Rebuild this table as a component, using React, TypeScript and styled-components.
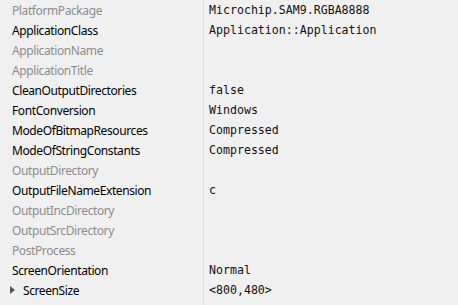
import * as React from 'react';
import styled, { createGlobalStyle } from 'styled-components';

interface Property {
  name: string;
  value?: string;
  set: boolean;
  expandable?: boolean;
}

const properties: Property[] = [
  { name: 'PlatformPackage', value: 'Microchip.SAM9.RGBA8888', set: false },
  { name: 'ApplicationClass', value: 'Application::Application', set: true },
  { name: 'ApplicationName', set: false },
  { name: 'ApplicationTitle', set: false },
  { name: 'CleanOutputDirectories', value: 'false', set: true },
  { name: 'FontConversion', value: 'Windows', set: true },
  { name: 'ModeOfBitmapResources', value: 'Compressed', set: true },
  { name: 'ModeOfStringConstants', value: 'Compressed', set: true },
  { name: 'OutputDirectory', set: false },
  { name: 'OutputFileNameExtension', value: 'c', set: true },
  { name: 'OutputIncDirectory', set: false },
  { name: 'OutputSrcDirectory', set: false },
  { name: 'PostProcess', set: false },
  { name: 'ScreenOrientation', value: 'Normal', set: true },
  { name: 'ScreenSize', value: '<800,480>', set: true, expandable: true },
];

const GlobalStyle = createGlobalStyle`
  html, body {
    margin: 0;
    background: #f0f0f0;
  }
`;

// two-column property grid with a thin splitter line between names and values
const Grid = styled.div`
  display: grid;
  grid-template-columns: 203px 1fr;
  height: 305px;
  align-content: start;
  background: linear-gradient(#d9d9d9, #d9d9d9) 203px 0 / 1px 100% no-repeat, #f0f0f0;
`;

const NameCell = styled.div<{ $set: boolean; $indent: number }>`
  display: flex;
  align-items: center;
  height: 20px;
  padding-left: ${(p) => p.$indent}px;
  font-family: 'Noto Sans', 'Open Sans', sans-serif;
  font-size: 12px;
  letter-spacing: -0.4px;
  color: ${(p) => (p.$set ? '#000' : '#8c8c8c')};
  white-space: nowrap;
  position: relative;
`;

const Arrow = styled.span`
  position: absolute;
  left: 10px;
  top: 6px;
  width: 0;
  height: 0;
  border-top: 4.5px solid transparent;
  border-bottom: 4.5px solid transparent;
  border-left: 5px solid #555;
`;

const ValueCell = styled.div`
  display: flex;
  align-items: center;
  height: 20px;
  padding-left: 6px;
  font-family: 'DejaVu Sans Mono', 'Liberation Mono', monospace;
  font-size: 11.6px;
  color: #111;
  white-space: pre;
`;

export default function App() {
  return (
    <>
      <GlobalStyle />
      <Grid>
        {properties.map((p) => (
          <React.Fragment key={p.name}>
            <NameCell $set={p.set} $indent={p.expandable ? 23 : 12}>
              {p.expandable && <Arrow />}
              {p.name}
            </NameCell>
            <ValueCell>{p.value ?? ''}</ValueCell>
          </React.Fragment>
        ))}
      </Grid>
    </>
  );
}
